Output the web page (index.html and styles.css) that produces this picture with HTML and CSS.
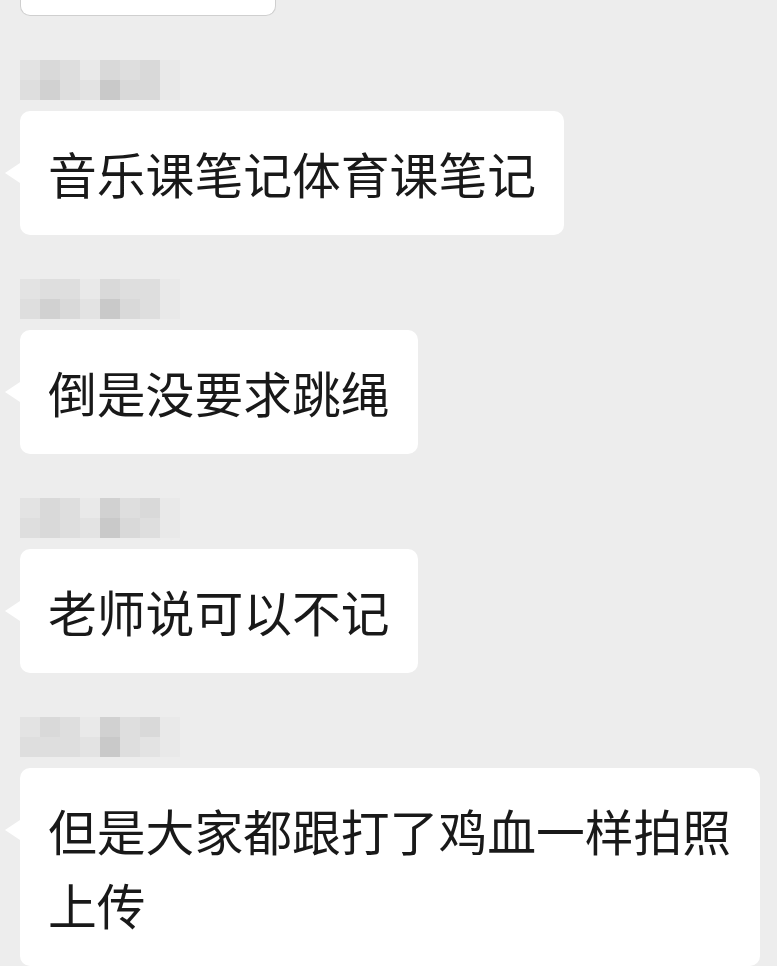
FILE: index.html
```html
<!DOCTYPE html>
<html lang="zh-CN">
<head>
    <meta charset="UTF-8">
    <meta name="viewport" content="width=device-width, initial-scale=1.0">
    <title>聊天记录</title>
    <link rel="stylesheet" href="styles.css">
</head>
<body>
    <div class="chat">
        <div class="bubble-cut"></div>

        <div class="msg">
            <div class="name">
                <span class="c2"></span><span class="c4"></span><span class="c3"></span><span class="c1"></span><span class="c4"></span><span class="c3"></span><span class="c4"></span><span class="c1"></span>
                <span class="c3"></span><span class="c5"></span><span class="c3"></span><span class="c2"></span><span class="c6"></span><span class="c4"></span><span class="c4"></span><span class="c1"></span>
            </div>
            <div class="bubble">音乐课笔记体育课笔记</div>
        </div>

        <div class="msg">
            <div class="name">
                <span class="c2"></span><span class="c3"></span><span class="c3"></span><span class="c1"></span><span class="c4"></span><span class="c3"></span><span class="c3"></span><span class="c1"></span>
                <span class="c3"></span><span class="c5"></span><span class="c4"></span><span class="c2"></span><span class="c6"></span><span class="c4"></span><span class="c3"></span><span class="c1"></span>
            </div>
            <div class="bubble">倒是没要求跳绳</div>
        </div>

        <div class="msg">
            <div class="name">
                <span class="c2"></span><span class="c4"></span><span class="c3"></span><span class="c1"></span><span class="c5"></span><span class="c3"></span><span class="c4"></span><span class="c1"></span>
                <span class="c3"></span><span class="c4"></span><span class="c3"></span><span class="c2"></span><span class="c6"></span><span class="c4"></span><span class="c3"></span><span class="c1"></span>
            </div>
            <div class="bubble">老师说可以不记</div>
        </div>

        <div class="msg">
            <div class="name">
                <span class="c2"></span><span class="c4"></span><span class="c3"></span><span class="c1"></span><span class="c5"></span><span class="c3"></span><span class="c4"></span><span class="c1"></span>
                <span class="c3"></span><span class="c3"></span><span class="c3"></span><span class="c2"></span><span class="c6"></span><span class="c3"></span><span class="c2"></span><span class="c1"></span>
            </div>
            <div class="bubble">但是大家都跟打了鸡血一样拍照上传</div>
        </div>
    </div>
</body>
</html>
```

FILE: styles.css
```css
body {
    margin: 0;
    background-color: #ededed;
    font-family: "Noto Sans CJK SC", "Noto Sans", sans-serif;
    color: #191919;
    overflow: hidden;
}

.chat {
    padding: 0 17px 0 20px;
}

.bubble-cut {
    width: 254px;
    height: 15px;
    background-color: #fff;
    border: 1px solid #cfcfcf;
    border-top: none;
    border-radius: 0 0 10px 10px;
}

.msg {
    margin-top: 44px;
}

/* blurred nickname */
.name {
    display: grid;
    grid-template-columns: repeat(8, 20px);
    grid-auto-rows: 20px;
    width: 160px;
    margin-bottom: 11px;
}

.c1 { background-color: #e9e9e9; }
.c2 { background-color: #e3e3e3; }
.c3 { background-color: #dedede; }
.c4 { background-color: #d9d9d9; }
.c5 { background-color: #d1d1d1; }
.c6 { background-color: #c9c9c9; }

.bubble {
    position: relative;
    width: fit-content;
    box-sizing: border-box;
    max-width: 740px;
    padding: 25px 28px;
    background-color: #fff;
    border-radius: 10px;
    font-size: 48.8px;
    line-height: 74px;
}

.bubble::before {
    content: "";
    position: absolute;
    left: -15px;
    top: 52px;
    border-top: 10px solid transparent;
    border-bottom: 10px solid transparent;
    border-right: 15px solid #fff;
}
```
